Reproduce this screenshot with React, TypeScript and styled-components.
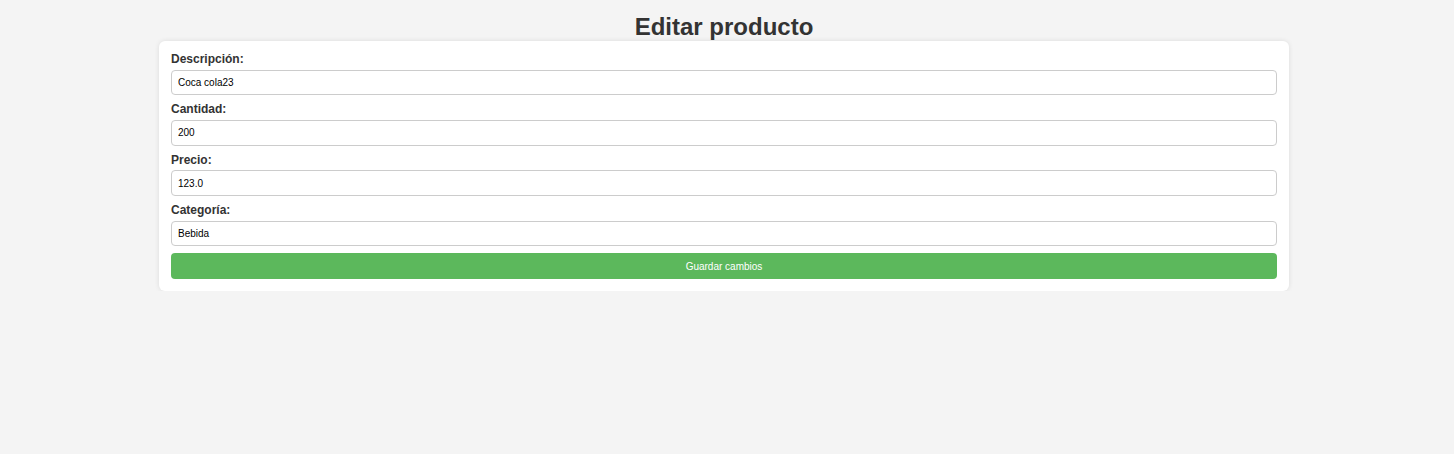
import React from "react";
import styled, { createGlobalStyle } from "styled-components";

const GlobalStyle = createGlobalStyle`
  html, body {
    margin: 0;
    padding: 0;
    background: #f4f4f4;
    font-family: "Liberation Sans", Arial, sans-serif;
  }
`;

const Page = styled.div`
  display: flex;
  flex-direction: column;
  align-items: center;
  padding: 12px 6px 0 0;
`;

const Title = styled.h1`
  margin: 0;
  font-size: 24px;
  font-weight: bold;
  line-height: 29px;
  color: #333;
  text-align: center;
`;

const Card = styled.form`
  width: 1130px;
  box-sizing: border-box;
  background: #fff;
  border-radius: 6px;
  box-shadow: 0 0 5px rgba(0, 0, 0, 0.1);
  padding: 12px;
  display: flex;
  flex-direction: column;
`;

const Label = styled.label`
  display: block;
  font-size: 12px;
  font-weight: bold;
  line-height: 13.8px;
  color: #333;
  margin-bottom: 3px;
`;

const Input = styled.input`
  display: block;
  width: 100%;
  height: 25.5px;
  box-sizing: border-box;
  font-family: "Liberation Sans", Arial, sans-serif;
  font-size: 10px;
  line-height: 11.5px;
  color: #000;
  padding: 6px;
  border: 1px solid #ccc;
  border-radius: 4px;
  margin: 0 0 8px 0;
  background: #fff;
  outline: none;
`;

const Button = styled.button`
  display: block;
  width: 100%;
  height: 25.5px;
  box-sizing: border-box;
  margin-top: -1px;
  font-family: "Liberation Sans", Arial, sans-serif;
  font-size: 10px;
  line-height: 11.5px;
  color: #fff;
  background: #5cb85c;
  border: none;
  border-radius: 4px;
  padding: 8px 7px 6px;
  cursor: pointer;
`;

const fields = [
  { id: "descripcion", label: "Descripción:", value: "Coca cola23" },
  { id: "cantidad", label: "Cantidad:", value: "200" },
  { id: "precio", label: "Precio:", value: "123.0" },
  { id: "categoria", label: "Categoría:", value: "Bebida" },
];

export default function App() {
  return (
    <>
      <GlobalStyle />
      <Page>
        <Title>Editar producto</Title>
        <Card onSubmit={(e) => e.preventDefault()}>
          {fields.map((f) => (
            <React.Fragment key={f.id}>
              <Label htmlFor={f.id}>{f.label}</Label>
              <Input id={f.id} defaultValue={f.value} />
            </React.Fragment>
          ))}
          <Button type="submit">Guardar cambios</Button>
        </Card>
      </Page>
    </>
  );
}
